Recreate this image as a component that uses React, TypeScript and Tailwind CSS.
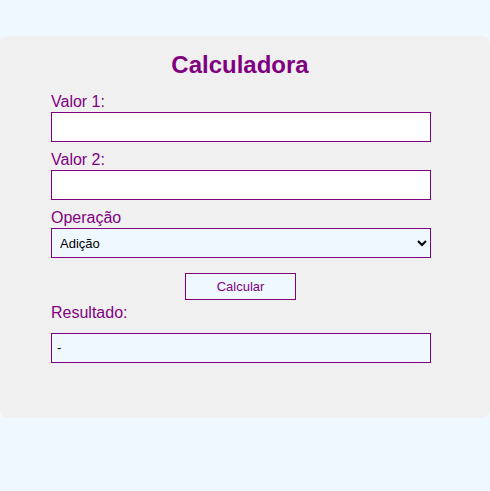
const purple = 'text-[#800080]';

const Field = ({ label, children }: { label: string; children: React.ReactNode }) => (
  <div className="flex flex-col">
    <label className={`block text-[16px] leading-[18px] mb-px ${purple}`}>{label}</label>
    {children}
  </div>
);

const App = () => {
  return (
    <div className="min-h-screen bg-[#f0f8ff] pt-9 font-['Liberation_Sans',Arial,sans-serif]">
      <div className="bg-[#f0f0f0] rounded-lg h-[382px] pt-[15px]">
        <div className="w-[480px]">
          <h1 className={`text-center text-[24px] leading-[28px] font-bold ${purple}`}>Calculadora</h1>

          <div className="ml-[51px] w-[380px] mt-[14px] flex flex-col gap-[9px]">
            <Field label="Valor 1:">
              <input type="number" className="h-[30px] bg-white border border-[#800080] px-1 text-[13px] outline-none" />
            </Field>
            <Field label="Valor 2:">
              <input type="number" className="h-[30px] bg-white border border-[#800080] px-1 text-[13px] outline-none" />
            </Field>
            <Field label="Operação">
              <select className="h-[30px] bg-[#f0f8ff] border border-[#800080] px-1 text-[13px] text-black outline-none">
                <option>Adição</option>
                <option>Subtração</option>
                <option>Multiplicação</option>
                <option>Divisão</option>
              </select>
            </Field>
          </div>

          <div className="flex justify-center mt-[15px] pl-px">
            <button className={`w-[111px] h-[27px] bg-[#f0f8ff] border border-[#800080] text-[13px] ${purple}`}>
              Calcular
            </button>
          </div>

          <div className="ml-[51px] w-[380px] mt-[4px]">
            <p className={`text-[16px] leading-[18px] ${purple}`}>Resultado:</p>
            <div className="mt-[11px] h-[30px] bg-[#f0f8ff] border border-[#800080] px-[5px] flex items-center text-[13px] text-black">
              -
            </div>
          </div>
        </div>
      </div>
    </div>
  );
};

export default App;
